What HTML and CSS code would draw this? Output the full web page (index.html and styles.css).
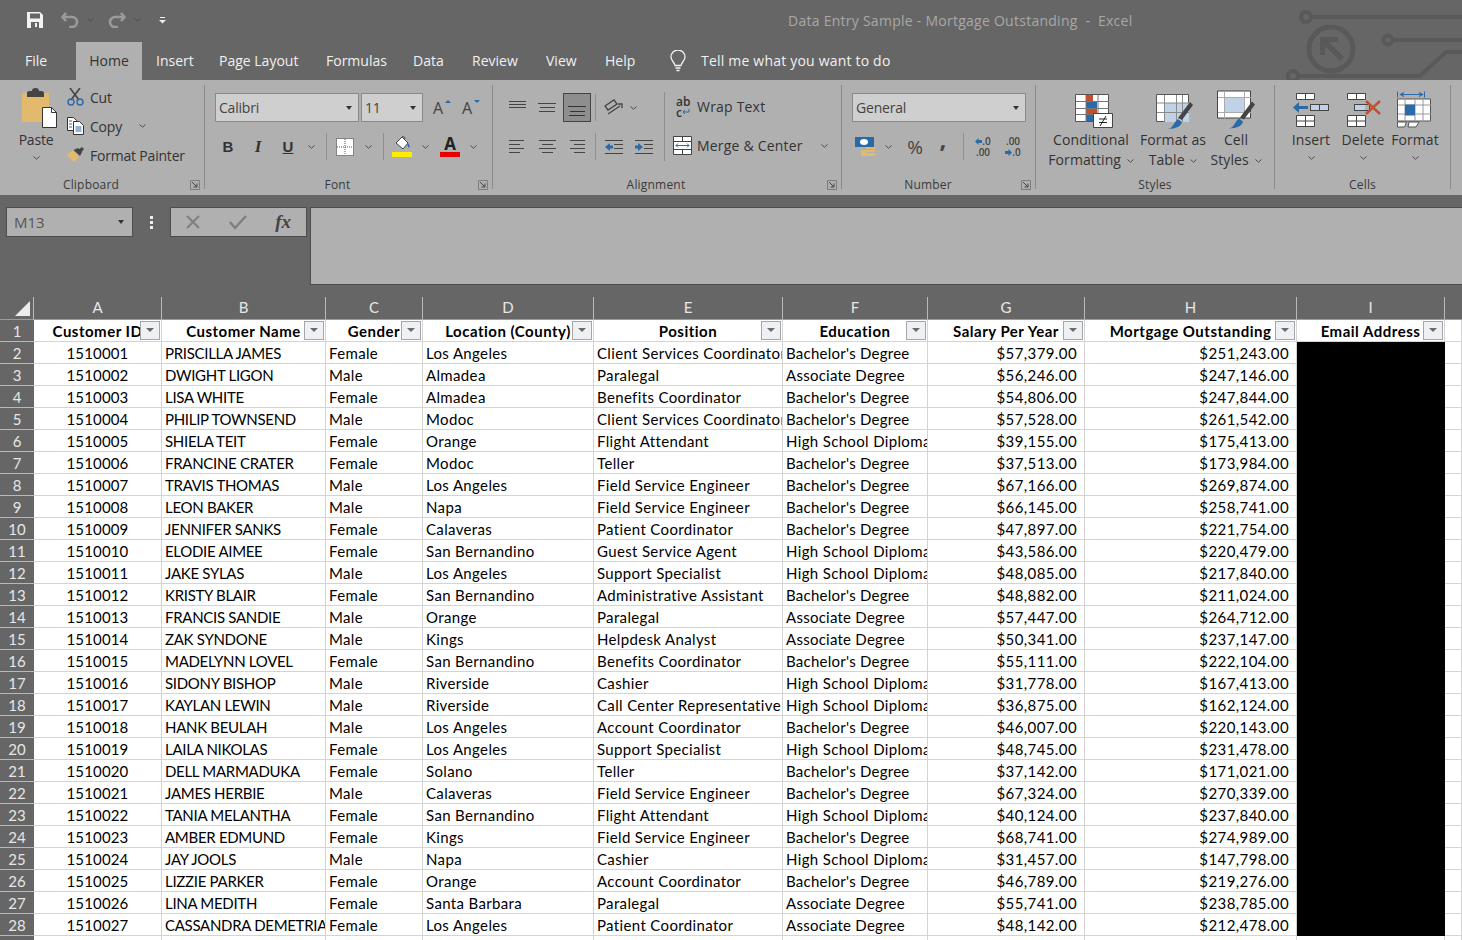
FILE: index.html
```html
<!DOCTYPE html>
<html lang="en">
<head>
<meta charset="utf-8">
<title>Data Entry Sample - Mortgage Outstanding - Excel</title>
<link rel="stylesheet" href="styles.css">
</head>
<body>
<svg class="sprite" aria-hidden="true">
  <symbol id="chev" viewBox="0 0 7 4"><path d="M.5.5 3.5 3.2 6.5.5" fill="none" stroke="currentColor" stroke-width="1"/></symbol>
  <symbol id="launch" viewBox="0 0 10 10"><path d="M.5 9.5V.5h9v9z" fill="none" stroke="#7d7d7d"/><path d="M2 2l5 5M7 3.5V7H3.5" fill="none" stroke="#444"/></symbol>
</svg>
<header class="chrome">
  <div class="titlebar">
    <div class="qat">
      <svg class="i-save" width="16" height="16" viewBox="0 0 16 16"><path d="M0 0h13l3 3v13H0z" fill="#f2f2f2"/><path d="M3 1.500h10v5H3z" fill="#666"/><path d="M4 10h8v6H4z" fill="#666"/><path d="M8 11h2v4H8z" fill="#f2f2f2"/></svg>
      <svg class="i-undo" width="18" height="16" viewBox="0 0 18 16"><path d="M5 1 1.500 5 5 9M2 5h9a5 5 0 0 1 0 10H8" fill="none" stroke="#9a9a9a" stroke-width="2.600"/></svg>
      <svg class="chev q-chev"><use href="#chev"/></svg>
      <svg class="i-redo" width="18" height="16" viewBox="0 0 18 16"><path d="M13 1l3.500 4L13 9M16 5H7a5 5 0 0 0 0 10h3" fill="none" stroke="#9a9a9a" stroke-width="2.600"/></svg>
      <svg class="chev q-chev"><use href="#chev"/></svg>
      <svg class="i-custom" width="7" height="7" viewBox="0 0 7 7"><path d="M1 .5h5" stroke="#eee"/><path d="M0 3h7L3.500 6.600z" fill="#eee"/></svg>
    </div>
    <div class="doc-title">Data Entry Sample - Mortgage Outstanding&nbsp; - &nbsp;Excel</div>
  </div>
  <nav class="tabs">
    <span class="tab tab-file">File</span>
    <span class="tab tab-home">Home</span>
    <span class="tab tab-insert">Insert</span>
    <span class="tab tab-layout">Page Layout</span>
    <span class="tab tab-formulas">Formulas</span>
    <span class="tab tab-data">Data</span>
    <span class="tab tab-review">Review</span>
    <span class="tab tab-view">View</span>
    <span class="tab tab-help">Help</span>
    <svg class="bulb" width="16" height="22" viewBox="0 0 16 22"><path d="M5 15.500C4.500 12 1 11 1 7a7 7 0 0 1 14 0c0 4-3.500 5-4 8.500z" fill="none" stroke="#f2f2f2" stroke-width="1.300"/><path d="M5.500 18h5M6.500 20.500h3" stroke="#f2f2f2" stroke-width="1.300"/></svg>
    <span class="tell">Tell me what you want to do</span>
  </nav>
  <svg class="circuit" width="176" height="80" viewBox="0 0 176 80" aria-hidden="true">
    <g fill="none" stroke="#595959" stroke-width="4">
      <circle cx="20" cy="17" r="5"/><path d="M25 17h151"/>
      <circle cx="102" cy="40" r="4.500"/><path d="M107 40h69"/>
      <circle cx="7" cy="76" r="5"/><path d="M12 76h122l26-24h16"/>
      <circle cx="45" cy="49" r="22" stroke-width="5"/>
    </g>
    <path d="M34 37h18v5h-9l15 15-4 4-15-15v9h-5z" fill="#595959"/>
  </svg>
</header>

<section class="ribbon">
  <div class="group g-clip">
    <div class="body">
      <div class="paste">
        <svg width="42" height="40" viewBox="0 0 42 40"><path d="M7 5h27v29H7z" fill="#e3ba6d"/><path d="M12 5c0-2 3-2 5-2 0-2 1-3 3.500-3S24 1 24 3c2 0 5 0 5 2v4H12z" fill="#444"/><path d="M27.500 19.500h9l5 5v15h-14z" fill="#fff" stroke="#333"/><path d="M36.500 19.500v5h5" fill="none" stroke="#333"/></svg>
        <span class="lbl">Paste</span>
        <svg class="chev"><use href="#chev"/></svg>
      </div>
      <div class="clip-list">
        <div class="clip-row">
          <svg width="17" height="18" viewBox="0 0 17 18"><path d="M3 0l9 12M13 0 4 12" stroke="#444" stroke-width="1.600" fill="none"/><circle cx="4" cy="14" r="3" fill="none" stroke="#2b6aa8" stroke-width="1.400"/><circle cx="13" cy="14" r="3" fill="none" stroke="#2b6aa8" stroke-width="1.400"/></svg>
          <span>Cut</span>
        </div>
        <div class="clip-row">
          <svg width="17" height="18" viewBox="0 0 17 18"><path d="M.5.500h6l3 3v10h-9z" fill="#fff" stroke="#333"/><path d="M6.500 4.500h6l4 4v9h-10z" fill="#fff" stroke="#333"/><path d="M2 4h3M2 7h3M2 10h3M8.500 10h6M8.500 12h6M8.500 14h6" stroke="#2b6aa8"/></svg>
          <span>Copy</span>
          <svg class="chev copy-chev"><use href="#chev"/></svg>
        </div>
        <div class="clip-row">
          <svg width="17" height="16" viewBox="0 0 17 16"><path d="M0 8l6-5 6 7-5 5z" fill="#e3ba6d"/><path d="M6.500 3 11 1l4 4-2 4z" fill="#444"/><path d="M11 3l4-3 2 2-3 4z" fill="#444"/></svg>
          <span>Format Painter</span>
        </div>
      </div>
    </div>
    <div class="glabel"><span>Clipboard</span><svg class="launch"><use href="#launch"/></svg></div>
  </div>

  <div class="group g-font">
    <div class="body stack">
      <div class="row font-top">
        <div class="combo font-name">Calibri<i class="caret"></i></div>
        <div class="combo font-size">11<i class="caret"></i></div>
        <span class="grow">A<i class="up"></i></span>
        <span class="grow shrink">A<i class="down"></i></span>
      </div>
      <div class="row tools">
        <span class="btn fmt">B</span>
        <span class="btn fmt italic">I</span>
        <span class="btn fmt under">U</span>
        <svg class="chev mini"><use href="#chev"/></svg>
        <i class="sep"></i>
        <span class="btn"><svg width="18" height="18" viewBox="0 0 18 18"><path d="M.5.500h17v17H.5z" fill="#fff" stroke="#333" stroke-dasharray="1 1"/><path d="M9 1v16M1 9h16" stroke="#555" stroke-dasharray="1 1"/></svg></span>
        <svg class="chev mini"><use href="#chev"/></svg>
        <i class="sep"></i>
        <span class="btn"><svg width="20" height="21" viewBox="0 0 20 21"><path d="M4 7l6-6 6 6-5 6z" fill="#fff" stroke="#444"/><path d="M10 1c2-1 3 0 3 2" fill="none" stroke="#444"/><path d="M16 7c2 2 2 4 1 5-1-1-2-3-1-5z" fill="#2b6aa8"/><path d="M0 16h20v5H0z" fill="#ffed00"/></svg></span>
        <svg class="chev mini"><use href="#chev"/></svg>
        <span class="btn color-a"><b>A</b><i></i></span>
        <svg class="chev mini"><use href="#chev"/></svg>
      </div>
    </div>
    <div class="glabel"><span>Font</span><svg class="launch"><use href="#launch"/></svg></div>
  </div>

  <div class="group g-align">
    <div class="body">
      <div class="stack align-left">
        <div class="row">
          <span class="btn"><svg width="18" height="18" viewBox="0 0 18 18"><path d="M1 2.500h17M1 5.500h17M1 8.500h17" stroke="#444"/></svg></span>
          <span class="btn"><svg width="18" height="10" viewBox="0 0 18 10"><path d="M0 .5h18M2 4.500h15M1 8.500h16" stroke="#444"/></svg></span>
          <span class="btn on"><svg width="18" height="12" viewBox="0 0 18 12"><path d="M0 1.500h18M2 6.500h15M1 10.500h16" stroke="#333"/></svg></span>
          <i class="sep s2"></i>
          <span class="btn"><svg width="20" height="18" viewBox="0 0 20 18"><path d="M1 7l9-6 3 4-9 6zM4 15 16 7" fill="none" stroke="#444" stroke-width="1.300"/><path d="M14 5h4v4" fill="none" stroke="#444" stroke-width="1.300"/></svg></span>
          <svg class="chev mini overlap"><use href="#chev"/></svg>
        </div>
        <div class="row">
          <span class="btn"><svg width="16" height="13" viewBox="0 0 16 13"><path d="M0 .5h15M0 4.500h11M0 8.500h15M0 12.500h11" stroke="#444"/></svg></span>
          <span class="btn"><svg width="17" height="13" viewBox="0 0 17 13"><path d="M0 .5h17M3 4.500h11M0 8.500h17M3 12.500h11" stroke="#444"/></svg></span>
          <span class="btn"><svg width="16" height="13" viewBox="0 0 16 13"><path d="M1 .5h15M5 4.500h11M1 8.500h15M5 12.500h11" stroke="#444"/></svg></span>
          <i class="sep s2"></i>
          <span class="btn"><svg width="18" height="14" viewBox="0 0 18 14"><path d="M0 .5h18M9 4.500h9M9 8.500h9M0 13.500h18" stroke="#444"/><path d="M0 7l5-4v2.500h3v3H5V11z" fill="#2b6aa8"/></svg></span>
          <span class="btn"><svg width="18" height="14" viewBox="0 0 18 14"><path d="M0 .5h18M9 4.500h9M9 8.500h9M0 13.500h18" stroke="#444"/><path d="M8 7 3 3v2.500H0v3h3V11z" fill="#2b6aa8"/></svg></span>
        </div>
      </div>
      <div class="stack align-right">
        <div class="row ar-row">
          <span class="ar-icon wrap-ic"><b>ab</b><b>c<svg width="8" height="7" viewBox="0 0 8 7"><path d="M7 0v3H1M3 1 1 3l2 2" fill="none" stroke="#2b6aa8"/></svg></b></span>
          <span>Wrap Text</span>
        </div>
        <div class="row ar-row">
          <span class="ar-icon"><svg width="19" height="19" viewBox="0 0 19 19"><path d="M.5.500h18v18H.5z" fill="#fff" stroke="#444"/><path d="M1 5.500h17M1 13.500h17M9.500 1v4M9.500 14v4" stroke="#444"/><path d="M3 9.500h13M5 7.500l-2 2 2 2M14 7.500l2 2-2 2" fill="none" stroke="#2b6aa8"/></svg></span>
          <span>Merge &amp; Center</span>
          <svg class="chev merge-chev"><use href="#chev"/></svg>
        </div>
      </div>
    </div>
    <div class="glabel"><span>Alignment</span><svg class="launch"><use href="#launch"/></svg></div>
  </div>

  <div class="group g-num">
    <div class="body stack">
      <div class="row num-top"><div class="combo num-name">General<i class="caret"></i></div></div>
      <div class="row tools">
        <span class="btn"><svg width="20" height="19" viewBox="0 0 20 19"><path d="M0 0h19v10H0z" fill="#2b6aa8"/><ellipse cx="9" cy="5" rx="4" ry="3" fill="#fff"/><path d="M11 10h9v9h-9z" fill="#e3ba6d"/><path d="M6 13h5v6H6z" fill="#e3ba6d"/><path d="M11 12.500h9M11 15.500h9" stroke="#b0b0b0"/></svg></span>
        <svg class="chev mini"><use href="#chev"/></svg>
        <span class="btn pct">%</span>
        <span class="btn comma">,</span>
        <i class="sep"></i>
        <span class="btn dec"><i class="d-top"><svg width="7" height="7" viewBox="0 0 7 7"><path d="M0 3.500 3.500 0v2H7v3H3.500v2z" fill="#2b6aa8"/></svg>.0</i><i>.00</i></span>
        <span class="btn dec"><i class="d-top">.00</i><i><svg width="7" height="7" viewBox="0 0 7 7"><path d="M7 3.500 3.500 0v2H0v3h3.500v2z" fill="#2b6aa8"/></svg>.0</i></span>
      </div>
    </div>
    <div class="glabel center"><span>Number</span><svg class="launch"><use href="#launch"/></svg></div>
  </div>

  <div class="group g-styles">
    <div class="body">
      <div class="big w90 ic-cond">
        <svg width="38" height="35" viewBox="0 0 38 35"><path d="M.5.500h33v27H.5z" fill="#fff" stroke="#555"/><path d="M11 14h11v6H11z" fill="#c0502e"/><path d="M11 7h11v7H11zM11 20h7v7h-7z" fill="#2b6aa8"/><path d="M1 7.500h33M1 14.500h33M1 20.500h33M11 1v27M23 1v27" stroke="#777"/><path d="M11 1h7v6h-7z" fill="#c0502e"/><path d="M18.500 19.500h19v14h-19z" fill="#fff" stroke="#444"/><path d="M24 25h8M24 28.500h8M31 22l-6 10" stroke="#222"/></svg>
        <span class="lbl">Conditional</span>
        <span class="lbl">Formatting <svg class="chev"><use href="#chev"/></svg></span>
      </div>
      <div class="big w74 ic-table">
        <svg width="38" height="35" viewBox="0 0 38 35"><path d="M.5.500h32v27H.5z" fill="#fff" stroke="#555"/><path d="M8 9h25v19H8z" fill="#bfd2e6"/><path d="M1 9h32M1 18.500h32M8.500 1v27M20.500 1v27M26.500 1v27" stroke="#8a8a8a"/><path d="M22 24 34 8l3 3-11 15z" fill="#444"/><path d="M11 35c6 0 6-6 11-10l4 3c-1 4-5 7-15 7z" fill="#2b6aa8"/></svg>
        <span class="lbl">Format as</span>
        <span class="lbl">Table <svg class="chev"><use href="#chev"/></svg></span>
      </div>
      <div class="big w52 cell-st">
        <svg width="38" height="38" viewBox="0 0 38 38"><path d="M.5.500h33v27H.5z" fill="#fff" stroke="#444"/><path d="M8 7h19v15H8z" fill="#bfd2e6"/><path d="M1 7h33M1 22h33M7.500 1v27M27.500 1v27" stroke="#aaa"/><path d="M23 27 35 11l3 3-11 15z" fill="#444"/><path d="M11 38c6 0 6-6 11-10l4 3c-1 4-5 7-15 7z" fill="#2b6aa8"/></svg>
        <span class="lbl">Cell</span>
        <span class="lbl">Styles <svg class="chev"><use href="#chev"/></svg></span>
      </div>
    </div>
    <div class="glabel full"><span>Styles</span></div>
  </div>

  <div class="group g-cells">
    <div class="body">
      <div class="big w52 cell-btn">
        <svg width="36" height="34" viewBox="0 0 36 34"><path d="M3.500.500h18v6h-18zM3.500 22.500h18v11h-18zM17.500 11.500h18v6h-18z" fill="#fff" stroke="#444"/><path d="M18 12h17v5H18z" fill="#bfd2e6"/><path d="M17.500 11.500h18v6h-18zM26.500 11v7M12.500 1v6M12.500 23v10M4 28h17" fill="none" stroke="#444"/><path d="M0 14.500 6 9v4h9v3H6v4z" fill="#2b6aa8"/></svg>
        <span class="lbl">Insert</span>
        <svg class="chev"><use href="#chev"/></svg>
      </div>
      <div class="big w52 cell-btn ic-del">
        <svg width="36" height="34" viewBox="0 0 36 34"><path d="M.5.500h18v6H.5zM.5 22.500h18v11H.5zM7.500 11.500h10v6h-10z" fill="#fff" stroke="#444"/><path d="M8 12h10v5H8z" fill="#bfd2e6"/><path d="M9.500 1v6M9.500 23v10M1 28h17M7.500 11.500h15v6h-15z" fill="none" stroke="#444"/><path d="M19 8l14 13M33 8 19 21" stroke="#c0502e" stroke-width="2.400"/></svg>
        <span class="lbl">Delete</span>
        <svg class="chev"><use href="#chev"/></svg>
      </div>
      <div class="big w52 cell-btn fmt-ic">
        <svg width="36" height="38" viewBox="0 0 36 38"><path d="M.5 1v6M27.500 1v6" stroke="#2b6aa8"/><path d="M4 4h21M7 2 3.500 4 7 6M22 2l3.500 2L22 6" fill="none" stroke="#2b6aa8" stroke-width="1.200"/><path d="M.5 8.500h33v22H.5z" fill="#fff" stroke="#555"/><path d="M8 8v23M18 8v23M26 8v23M1 14.500h33M1 23.500h33" stroke="#999"/><path d="M8 14h10v11H8z" fill="#2b6aa8"/><path d="M.5 31.500h9l-2 5H.5zM12 31.500h10l-3 5h-8z" fill="#fff" stroke="#555"/></svg>
        <span class="lbl">Format</span>
        <svg class="chev"><use href="#chev"/></svg>
      </div>
    </div>
    <div class="glabel full"><span>Cells</span></div>
  </div>
</section>

<section class="formula">
  <div class="namebox">M13<i class="caret"></i></div>
  <div class="dots"><i></i><i></i><i></i></div>
  <div class="fx-box">
    <svg width="16" height="16" viewBox="0 0 16 16"><path d="M2 2l12 12M14 2 2 14" stroke="#7f7f7f" stroke-width="2"/></svg>
    <svg width="18" height="16" viewBox="0 0 18 16"><path d="M1 8l5 6L17 2" fill="none" stroke="#7f7f7f" stroke-width="2.400"/></svg>
    <span>fx</span>
  </div>
  <div class="formula-input"></div>
</section>

<main class="sheet">
<table>
<colgroup>
  <col class="c-h"><col class="c-a"><col class="c-b"><col class="c-c"><col class="c-d"><col class="c-e"><col class="c-f"><col class="c-g"><col class="c-i"><col class="c-j"><col class="c-k">
</colgroup>
<thead>
<tr class="cols"><th class="corner"><i></i></th><th>A</th><th>B</th><th>C</th><th>D</th><th>E</th><th>F</th><th>G</th><th>H</th><th>I</th><th class="last"></th></tr>
</thead>
<tbody>
<tr class="hdr"><th>1</th><td>Customer ID<i class="filter"></i></td><td>Customer Name<i class="filter"></i></td><td>Gender<i class="filter"></i></td><td>Location (County)<i class="filter"></i></td><td>Position<i class="filter"></i></td><td>Education<i class="filter"></i></td><td>Salary Per Year<i class="filter"></i></td><td>Mortgage Outstanding<i class="filter"></i></td><td>Email Address<i class="filter"></i></td><td></td></tr>
<tr><th>2</th><td class="id">1510001</td><td class="name">PRISCILLA JAMES</td><td>Female</td><td>Los Angeles</td><td>Client Services Coordinator</td><td class="edu">Bachelor's Degree</td><td class="num">$57,379.00</td><td class="num">$251,243.00</td><td class="redact"></td><td></td></tr>
<tr><th>3</th><td class="id">1510002</td><td class="name">DWIGHT LIGON</td><td>Male</td><td>Almadea</td><td>Paralegal</td><td class="edu">Associate Degree</td><td class="num">$56,246.00</td><td class="num">$247,146.00</td><td class="redact"></td><td></td></tr>
<tr><th>4</th><td class="id">1510003</td><td class="name">LISA WHITE</td><td>Female</td><td>Almadea</td><td>Benefits Coordinator</td><td class="edu">Bachelor's Degree</td><td class="num">$54,806.00</td><td class="num">$247,844.00</td><td class="redact"></td><td></td></tr>
<tr><th>5</th><td class="id">1510004</td><td class="name">PHILIP TOWNSEND</td><td>Male</td><td>Modoc</td><td>Client Services Coordinator</td><td class="edu">Bachelor's Degree</td><td class="num">$57,528.00</td><td class="num">$261,542.00</td><td class="redact"></td><td></td></tr>
<tr><th>6</th><td class="id">1510005</td><td class="name">SHIELA TEIT</td><td>Female</td><td>Orange</td><td>Flight Attendant</td><td>High School Diploma</td><td class="num">$39,155.00</td><td class="num">$175,413.00</td><td class="redact"></td><td></td></tr>
<tr><th>7</th><td class="id">1510006</td><td class="name">FRANCINE CRATER</td><td>Female</td><td>Modoc</td><td>Teller</td><td class="edu">Bachelor's Degree</td><td class="num">$37,513.00</td><td class="num">$173,984.00</td><td class="redact"></td><td></td></tr>
<tr><th>8</th><td class="id">1510007</td><td class="name">TRAVIS THOMAS</td><td>Male</td><td>Los Angeles</td><td>Field Service Engineer</td><td class="edu">Bachelor's Degree</td><td class="num">$67,166.00</td><td class="num">$269,874.00</td><td class="redact"></td><td></td></tr>
<tr><th>9</th><td class="id">1510008</td><td class="name">LEON BAKER</td><td>Male</td><td>Napa</td><td>Field Service Engineer</td><td class="edu">Bachelor's Degree</td><td class="num">$66,145.00</td><td class="num">$258,741.00</td><td class="redact"></td><td></td></tr>
<tr><th>10</th><td class="id">1510009</td><td class="name">JENNIFER SANKS</td><td>Female</td><td>Calaveras</td><td>Patient Coordinator</td><td class="edu">Bachelor's Degree</td><td class="num">$47,897.00</td><td class="num">$221,754.00</td><td class="redact"></td><td></td></tr>
<tr><th>11</th><td class="id">1510010</td><td class="name">ELODIE AIMEE</td><td>Female</td><td>San Bernandino</td><td>Guest Service Agent</td><td>High School Diploma</td><td class="num">$43,586.00</td><td class="num">$220,479.00</td><td class="redact"></td><td></td></tr>
<tr><th>12</th><td class="id">1510011</td><td class="name">JAKE SYLAS</td><td>Male</td><td>Los Angeles</td><td>Support Specialist</td><td>High School Diploma</td><td class="num">$48,085.00</td><td class="num">$217,840.00</td><td class="redact"></td><td></td></tr>
<tr><th>13</th><td class="id">1510012</td><td class="name">KRISTY BLAIR</td><td>Female</td><td>San Bernandino</td><td>Administrative Assistant</td><td class="edu">Bachelor's Degree</td><td class="num">$48,882.00</td><td class="num">$211,024.00</td><td class="redact"></td><td></td></tr>
<tr><th>14</th><td class="id">1510013</td><td class="name">FRANCIS SANDIE</td><td>Male</td><td>Orange</td><td>Paralegal</td><td class="edu">Associate Degree</td><td class="num">$57,447.00</td><td class="num">$264,712.00</td><td class="redact"></td><td></td></tr>
<tr><th>15</th><td class="id">1510014</td><td class="name">ZAK SYNDONE</td><td>Male</td><td>Kings</td><td>Helpdesk Analyst</td><td class="edu">Associate Degree</td><td class="num">$50,341.00</td><td class="num">$237,147.00</td><td class="redact"></td><td></td></tr>
<tr><th>16</th><td class="id">1510015</td><td class="name">MADELYNN LOVEL</td><td>Female</td><td>San Bernandino</td><td>Benefits Coordinator</td><td class="edu">Bachelor's Degree</td><td class="num">$55,111.00</td><td class="num">$222,104.00</td><td class="redact"></td><td></td></tr>
<tr><th>17</th><td class="id">1510016</td><td class="name">SIDONY BISHOP</td><td>Male</td><td>Riverside</td><td>Cashier</td><td>High School Diploma</td><td class="num">$31,778.00</td><td class="num">$167,413.00</td><td class="redact"></td><td></td></tr>
<tr><th>18</th><td class="id">1510017</td><td class="name">KAYLAN LEWIN</td><td>Male</td><td>Riverside</td><td>Call Center Representative</td><td>High School Diploma</td><td class="num">$36,875.00</td><td class="num">$162,124.00</td><td class="redact"></td><td></td></tr>
<tr><th>19</th><td class="id">1510018</td><td class="name">HANK BEULAH</td><td>Male</td><td>Los Angeles</td><td>Account Coordinator</td><td class="edu">Bachelor's Degree</td><td class="num">$46,007.00</td><td class="num">$220,143.00</td><td class="redact"></td><td></td></tr>
<tr><th>20</th><td class="id">1510019</td><td class="name">LAILA NIKOLAS</td><td>Female</td><td>Los Angeles</td><td>Support Specialist</td><td>High School Diploma</td><td class="num">$48,745.00</td><td class="num">$231,478.00</td><td class="redact"></td><td></td></tr>
<tr><th>21</th><td class="id">1510020</td><td class="name">DELL MARMADUKA</td><td>Female</td><td>Solano</td><td>Teller</td><td class="edu">Bachelor's Degree</td><td class="num">$37,142.00</td><td class="num">$171,021.00</td><td class="redact"></td><td></td></tr>
<tr><th>22</th><td class="id">1510021</td><td class="name">JAMES HERBIE</td><td>Male</td><td>Calaveras</td><td>Field Service Engineer</td><td class="edu">Bachelor's Degree</td><td class="num">$67,324.00</td><td class="num">$270,339.00</td><td class="redact"></td><td></td></tr>
<tr><th>23</th><td class="id">1510022</td><td class="name">TANIA MELANTHA</td><td>Female</td><td>San Bernandino</td><td>Flight Attendant</td><td>High School Diploma</td><td class="num">$40,124.00</td><td class="num">$237,840.00</td><td class="redact"></td><td></td></tr>
<tr><th>24</th><td class="id">1510023</td><td class="name">AMBER EDMUND</td><td>Female</td><td>Kings</td><td>Field Service Engineer</td><td class="edu">Bachelor's Degree</td><td class="num">$68,741.00</td><td class="num">$274,989.00</td><td class="redact"></td><td></td></tr>
<tr><th>25</th><td class="id">1510024</td><td class="name">JAY JOOLS</td><td>Male</td><td>Napa</td><td>Cashier</td><td>High School Diploma</td><td class="num">$31,457.00</td><td class="num">$147,798.00</td><td class="redact"></td><td></td></tr>
<tr><th>26</th><td class="id">1510025</td><td class="name">LIZZIE PARKER</td><td>Female</td><td>Orange</td><td>Account Coordinator</td><td class="edu">Bachelor's Degree</td><td class="num">$46,789.00</td><td class="num">$219,276.00</td><td class="redact"></td><td></td></tr>
<tr><th>27</th><td class="id">1510026</td><td class="name">LINA MEDITH</td><td>Female</td><td>Santa Barbara</td><td>Paralegal</td><td class="edu">Associate Degree</td><td class="num">$55,741.00</td><td class="num">$238,785.00</td><td class="redact"></td><td></td></tr>
<tr><th>28</th><td class="id">1510027</td><td class="name">CASSANDRA DEMETRIA</td><td>Female</td><td>Los Angeles</td><td>Patient Coordinator</td><td class="edu">Associate Degree</td><td class="num">$48,142.00</td><td class="num">$212,478.00</td><td class="redact"></td><td></td></tr>
<tr><th></th><td></td><td></td><td></td><td></td><td></td><td></td><td></td><td></td><td></td><td></td></tr>
</tbody>
</table>
</main>
</body>
</html>
```

FILE: styles.css
```css
* { box-sizing: border-box; }
html, body { margin: 0; height: 940px; overflow: hidden; }
body { width: 1462px; background: #fff; font-family: "Open Sans", "Noto Sans", sans-serif; font-size: 14px; color: #333; }
i { font-style: normal; display: block; }
svg { display: block; flex-shrink: 0; }
.sprite { width: 0; height: 0; position: absolute; }

/* Title bar and tabs */
.chrome { position: relative; height: 80px; background: #666; overflow: hidden; }
.titlebar { height: 40px; display: flex; align-items: center; }
.qat { display: flex; align-items: center; width: 172px; padding-left: 27px; }
.i-undo { margin-left: 18px; }
.q-chev { width: 7px; height: 4px; margin-left: 8px; color: #a6a6a6; }
.i-redo { margin-left: 14px; }
.i-custom { margin-left: 18px; }
.doc-title { margin-left: 616px; font-size: 14px; letter-spacing: .26px; color: #a8a8a8; white-space: pre; }
.tabs { height: 40px; padding-top: 2px; display: flex; align-items: center; color: #f0f0f0; font-size: 14px; }
.tab { height: 38px; line-height: 37px; white-space: nowrap; }
.tab-file { margin-left: 25px; width: 51px; }
.tab-home { width: 66px; background: #b0b0b0; color: #333; text-align: center; }
.tab-insert { margin-left: 14px; width: 63px; }
.tab-layout { width: 107px; }
.tab-formulas { width: 87px; }
.tab-data { width: 59px; }
.tab-review { width: 74px; }
.tab-view { width: 59px; }
.tab-help { width: 65px; }
.tell { margin: 0 0 2px 15px; white-space: nowrap; letter-spacing: .2px; }
.circuit { position: absolute; top: 0; right: 0; }

/* Ribbon */
.ribbon { height: 115px; padding: 5px 0 6px; background: #b0b0b0; display: flex; }
.group { height: 104px; flex-shrink: 0; display: flex; flex-direction: column; border-right: 1px solid #8a8a8a; }
.g-clip { width: 205px; }
.g-font { width: 288px; }
.g-align { width: 349px; }
.g-num { width: 194px; }
.g-styles { width: 239px; }
.g-cells { width: 176px; }
.body { height: 90px; display: flex; }
.stack { display: flex; flex-direction: column; gap: 10px; }
.row { height: 29px; display: flex; align-items: center; }
.glabel { height: 14px; line-height: 20px; display: flex; font-size: 12px; letter-spacing: .2px; color: #3a3a3a; }
.glabel span { flex: 1; text-align: center; }
.launch { width: 10px; height: 10px; margin: 5px 4px 0 8px; }
.glabel.center .launch { margin-left: 7px; }
.chev { width: 7px; height: 4px; display: inline-block; color: #4d4d4d; }
.lbl { display: block; height: 20px; line-height: 20px; white-space: nowrap; letter-spacing: -.2px; }
.big .lbl { letter-spacing: .1px; }
.btn { width: 30px; height: 29px; display: flex; align-items: center; justify-content: center; flex-shrink: 0; }
.sep { width: 1px; height: 27px; background: #8f8f8f; margin: 0 3px 0 8px; }
.mini { margin-left: 5px; margin-right: 3px; }
.caret { width: 0; height: 0; border: 3.5px solid transparent; border-top: 4px solid #333; border-bottom: 0; }

/* Clipboard */
.paste { width: 60px; margin-left: 6px; padding-top: 3px; display: flex; flex-direction: column; align-items: center; }
.paste .lbl { margin-top: 2px; }
.paste .chev { margin-top: 6px; }
.clip-list { margin-left: 1px; display: flex; flex-direction: column; gap: 5px; }
.clip-row { height: 24px; display: flex; align-items: center; gap: 6px; letter-spacing: -.2px; white-space: nowrap; }
.copy-chev { margin-left: 11px; }

/* Font */
.g-font .body { padding-top: 8px; }
.font-top { padding-left: 10px; }
.combo { height: 29px; padding: 0 6px 0 3px; display: flex; align-items: center; justify-content: space-between; background: #cfcfcf; border: 1px solid #8a8a8a; color: #444; letter-spacing: -.2px; }
.font-name { width: 144px; }
.font-size { width: 62px; margin-left: 2px; }
.grow { position: relative; width: 16px; margin-left: 10px; font-size: 16px; color: #444; }
.shrink { margin-left: 13px; }
.up, .down { position: absolute; top: 3px; right: -2px; border: 3px solid transparent; }
.up { border-bottom: 3px solid #2b6aa8; border-top: 0; }
.down { border-top: 3px solid #2b6aa8; border-bottom: 0; }
.tools { padding-left: 8px; }
.fmt { font-weight: 700; font-size: 15px; font-family: "Liberation Sans", sans-serif; color: #333; }
.italic { font-style: italic; font-family: "Liberation Serif", serif; font-size: 17px; }
.under { text-decoration: underline; }
.color-a { margin-left: 3px; flex-direction: column; }
.color-a b { font-size: 17px; line-height: 16px; color: #222; }
.color-a i { width: 20px; height: 5px; background: #e60000; }

/* Alignment */
.g-align .body { padding-top: 8px; }
.align-left { width: 171px; padding-left: 9px; }
.btn.on { width: 28px; margin: 0 1px; background: #8e8e8e; border: 1px solid #444; padding-top: 6px; }
.s2 { margin: 0 3px; }
.overlap { margin-left: 1px; }
.align-right { width: 177px; border-left: 1px solid #8f8f8f; height: 69px; margin-top: -1px; padding-left: 8px; gap: 10px; }
.ar-row { gap: 5px; letter-spacing: .2px; white-space: nowrap; }
.ar-icon { width: 19px; flex-shrink: 0; }
.wrap-ic { padding-left: 3px; font-size: 12px; line-height: 11px; letter-spacing: 0; }
.wrap-ic b { display: flex; align-items: center; font-weight: 600; color: #333; }
.merge-chev { margin-left: 13px; }

/* Number */
.g-num .body { padding-top: 8px; }
.num-top { padding-left: 10px; }
.num-name { width: 174px; }
.pct { margin-left: 5px; font-size: 19px; color: #444; }
.comma { width: 26px; font-size: 24px; font-weight: 700; line-height: 16px; color: #444; padding-bottom: 16px; }
.g-num .sep { margin: 0 4px 0 7px; }
.dec { flex-direction: column; font-size: 10px; line-height: 11px; font-weight: 600; color: #444; }
.dec i { display: flex; align-items: center; }

/* Styles and Cells */
.g-styles .body, .g-cells .body { padding-left: 10px; }
.big { display: flex; flex-direction: column; align-items: center; padding-top: 8px; }
.big > svg:first-child { height: 37px; }
.big .lbl .chev { margin-left: 2px; vertical-align: middle; }
.w90 { width: 90px; }
.w74 { width: 74px; }
.w52 { width: 52px; }
.ic-cond > svg:first-child { margin-left: 5px; }
.ic-table > svg:first-child { margin-left: 3px; }
.ic-del > svg:first-child { margin-left: 3px; }
.cell-st { padding-top: 4px; }
.cell-st > svg:first-child { height: 41px; }
.cell-btn { padding-top: 5px; }
.cell-btn > svg:first-child { height: 40px; }
.cell-btn > .chev { margin-top: 6px; }
.fmt-ic { padding-top: 4px; }
.fmt-ic > svg:first-child { height: 41px; }

/* Formula bar */
.formula { height: 102px; padding-top: 12px; background: #666; display: flex; align-items: flex-start; }
.namebox { width: 127px; height: 30px; margin-left: 6px; padding: 0 8px 0 7px; display: flex; align-items: center; justify-content: space-between; background: #b0b0b0; border: 1px solid #4d4d4d; color: #555; font-size: 15px; }
.dots { width: 37px; height: 30px; display: flex; flex-direction: column; align-items: center; justify-content: center; gap: 2px; }
.dots i { width: 3px; height: 3px; background: #eee; }
.fx-box { width: 137px; height: 30px; padding: 0 15px 0 14px; display: flex; align-items: center; justify-content: space-between; background: #b0b0b0; border: 1px solid #4d4d4d; }
.fx-box span { font-family: "Liberation Serif", serif; font-style: italic; font-weight: 700; font-size: 19px; color: #444; }
.formula-input { width: 1152px; height: 78px; margin-left: 3px; background: #b0b0b0; border: 1px solid #4d4d4d; border-right: 0; }

/* Sheet */
.sheet { height: 643px; overflow: hidden; }
table { width: 1462px; table-layout: fixed; border-collapse: separate; border-spacing: 0; font-family: Lato, "Liberation Sans", sans-serif; font-size: 15px; color: #000; }
.c-h { width: 34px; } .c-a { width: 128px; } .c-b { width: 164px; } .c-c { width: 97px; } .c-d { width: 171px; }
.c-e { width: 189px; } .c-f { width: 145px; } .c-g { width: 157px; } .c-i { width: 212px; } .c-j { width: 148px; } .c-k { width: 17px; }
th { background: #666; color: #e6e6e6; font-weight: 400; padding: 2px 0 0; height: 22px; line-height: 19px; border-right: 1px solid #b9b9b9; border-bottom: 1px solid #b9b9b9; overflow: hidden; }
.cols th { height: 23px; padding: 0 0 2px; line-height: 20px; border-bottom-color: #9c9c9c; }
.cols th.last { border-right: 0; }
tbody th { border-right: 0; }
.corner { position: relative; }
.corner i { position: absolute; left: 15px; top: 4px; width: 0; height: 0; border-left: 15px solid transparent; border-bottom: 15px solid #ececec; }
td { height: 22px; padding: 2px 0 0 3px; line-height: 19px; letter-spacing: .35px; border-right: 1px solid #d4d4d4; border-bottom: 1px solid #d4d4d4; white-space: nowrap; overflow: hidden; }
.id { text-align: center; padding: 2px 0 0; letter-spacing: .15px; }
.name { letter-spacing: -.3px; }
.edu { letter-spacing: .25px; }
.num { text-align: right; padding: 2px 7px 0 0; letter-spacing: .4px; }
.redact { background: #000; border-color: #000; box-shadow: 0 -1px #000; }
.hdr td { position: relative; padding: 2px 0 0; text-align: center; font-weight: 700; letter-spacing: .5px; color: #000; }
.filter { position: absolute; top: 1px; right: 1px; width: 20px; height: 19px; background: #eef0f4; border: 1px solid #a3a6ab; }
.filter::after { content: ""; position: absolute; left: 5px; top: 6px; border: 4px solid transparent; border-top: 4px solid #6a6a6a; border-bottom: 0; }
```
